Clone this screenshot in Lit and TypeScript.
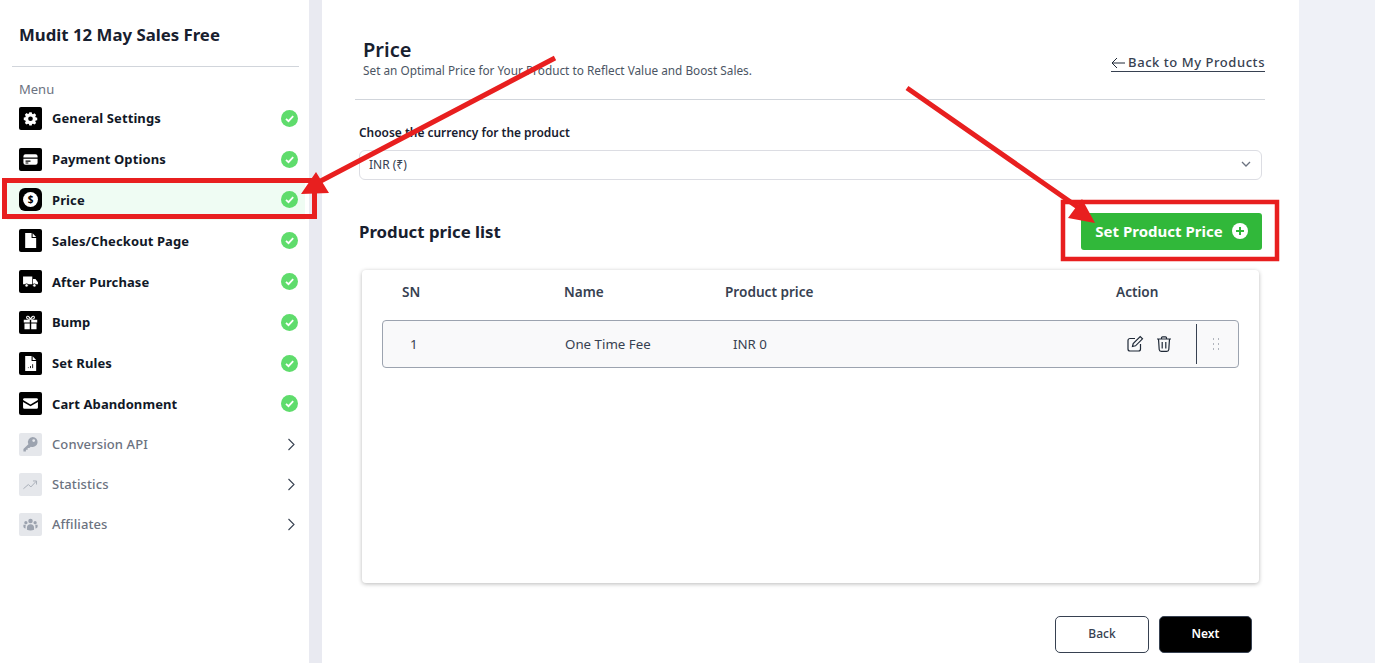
import { LitElement, html, css, svg } from 'lit';
import { customElement } from 'lit/decorators.js';

const icons: Record<string, unknown> = {
    gear: svg`<path fill-rule="evenodd" d="M10.3 3h3.4l.5 2.3 1.4.6 2-1.3 2.4 2.4-1.3 2 .6 1.4 2.2.5v3.4l-2.2.5-.6 1.4 1.3 2-2.4 2.4-2-1.3-1.4.6-.5 2.1h-3.4l-.5-2.1-1.4-.6-2 1.3-2.4-2.4 1.3-2-.6-1.4L2.5 14v-3.4l2.2-.5.6-1.4-1.3-2 2.4-2.4 2 1.3 1.4-.6zM12 9a3.3 3.3 0 1 0 0 6.600A3.300 3.300 0 0 0 12 9z" fill="#fff"/>`,
    card: svg`<path fill-rule="evenodd" d="M5 4.500h14a3 3 0 0 1 3 3V9H2V7.500a3 3 0 0 1 3-3zM2 11h20v5.500a3 3 0 0 1-3 3H5a3 3 0 0 1-3-3zm3 2.500V15h7v-1.500zm0 2.800v1.200h4v-1.200z" fill="#fff"/>`,
    dollar: svg`<circle cx="12" cy="12" r="10.500" fill="#fff"/><text x="12" y="16.800" text-anchor="middle" font-size="14" font-weight="700" font-family="Noto Sans" fill="#000">$</text>`,
    file: svg`<path d="M4.500 1.500h9v7h6.500V22.500H4.500z" fill="#fff"/><path d="M15 1.700 20 7h-5z" fill="#fff"/>`,
    truck: svg`<path d="M1.500 5h13v11h-13zM15.500 8.500H19l3.500 4.500v3h-7z" fill="#fff"/><circle cx="6.500" cy="17.500" r="2.300" fill="#fff" stroke="#000"/><circle cx="17.500" cy="17.500" r="2.300" fill="#fff" stroke="#000"/>`,
    gift: svg`<path d="M2.500 8h8.500v4H2.500zM13 8h8.500v4H13zM3.500 13.500H11V21.500H3.500zM13 13.500h7.500V21.500H13z" fill="#fff"/><path d="M12 7.500C10 2.500 6.500 2 6.500 5c0 2 3.500 2.500 5.500 2.500zm0 0c2-5 5.500-5.500 5.500-2.500 0 2-3.500 2.500-5.500 2.500z" fill="none" stroke="#fff" stroke-width="1.500"/>`,
    rules: svg`<path d="M4.500 1.500h9v7h6.500V22.500H4.500z" fill="#fff"/><path d="M15 1.700 20 7h-5z" fill="#fff"/><path d="M9 18.500v-1M12 18.500v-3M15 18.500v-5.500" stroke="#000" stroke-width="1.200"/>`,
    mail: svg`<path d="M3.500 4.500h17a2 2 0 0 1 2 2v.6L12 13.500 1.500 7.100v-.6a2 2 0 0 1 2-2z" fill="#fff"/><path d="M1.500 9.800 12 16l10.500-6.200v7.700a2 2 0 0 1-2 2h-17a2 2 0 0 1-2-2z" fill="#fff"/>`,
    key: svg`<path fill-rule="evenodd" d="M15 1.500a7 7 0 1 1-2.600 13.500L10.500 17H8v2.500H5.500V22H2v-3.500l7-7A7 7 0 0 1 15 1.500zm1.500 3a2 2 0 1 0 0 4 2 2 0 0 0 0-4z" fill="#9ca3af"/>`,
    trend: svg`<path d="M2 18l7-6 3.500 3.500L20 7.500M15.500 7H20.500V12" fill="none" stroke="#a5abb5" stroke-width="1.300"/>`,
    users: svg`<circle cx="12" cy="7" r="3.200" fill="#9ca3af"/><circle cx="5.500" cy="9.500" r="2.300" fill="#9ca3af"/><circle cx="18.500" cy="9.500" r="2.300" fill="#9ca3af"/><path d="M7 19.500v-3a5 5 0 0 1 10 0v3a14 14 0 0 1-10 0zM2 12.500h3.500a7 7 0 0 0-.5 3v2C3 17 2 16 2 15zM22 12.500h-3.500a7 7 0 0 1 .5 3v2c2-.5 3-1.500 3-2.500z" fill="#9ca3af"/>`,
};

const menu = [
    { label: 'General Settings', icon: 'gear', done: true },
    { label: 'Payment Options', icon: 'card', done: true },
    { label: 'Price', icon: 'dollar', done: true, active: true },
    { label: 'Sales/Checkout Page', icon: 'file', done: true },
    { label: 'After Purchase', icon: 'truck', done: true },
    { label: 'Bump', icon: 'gift', done: true },
    { label: 'Set Rules', icon: 'rules', done: true },
    { label: 'Cart Abandonment', icon: 'mail', done: true },
    { label: 'Conversion API', icon: 'key', done: false },
    { label: 'Statistics', icon: 'trend', done: false },
    { label: 'Affiliates', icon: 'users', done: false },
];

@customElement('app-root')
export class AppRoot extends LitElement {
    static styles = css`
        :host {
            display: block;
            position: relative;
            height: 663px;
            overflow: hidden;
            background: #eff1f7;
            font-family: 'Noto Sans', sans-serif;
            color: #111827;
        }

        .page {
            display: flex;
            height: 663px;
        }

        .side {
            width: 322px;
            flex: none;
            box-sizing: border-box;
            background: #fff;
            border-right: 13px solid #e9eaf1;
            padding: 0 10px 0 12px;
        }

        .side-title {
            font-size: 16.8px;
            font-weight: 700;
            line-height: 22px;
            color: #18202f;
            padding: 24px 0 20px 7px;
            border-bottom: 1px solid #d1d5db;
        }

        .menu-label {
            font-size: 13px;
            line-height: 18px;
            color: #6b7280;
            padding: 13px 0 0 7px;
        }

        .menu {
            display: flex;
            flex-direction: column;
        }

        .item {
            display: flex;
            align-items: center;
            height: 40.8px;
            margin: 0 -6px 0 -5px;
            padding: 0 7px 0 12px;
            font-size: 13px;
            font-weight: 700;
            letter-spacing: 0.1px;
            color: #111827;
        }

        .item.active {
            background: #effcf3;
        }

        .item.off {
            height: 40px;
            font-weight: 500;
            color: #6b7280;
        }

        .item.off .ic {
            background: #e5e7eb;
        }

        .ic {
            width: 23px;
            height: 23px;
            flex: none;
            border-radius: 2px;
            background: #000;
            display: flex;
            align-items: center;
            justify-content: center;
            margin-right: 10px;
        }

        .ic.round {
            border-radius: 6px;
        }

        .ic svg {
            width: 17px;
            height: 17px;
        }

        .label {
            flex: 1;
        }

        .tail {
            width: 17px;
            height: 17px;
        }

        .main {
            width: 977px;
            flex: none;
            box-sizing: border-box;
            background: #fff;
            padding: 0 34px 0 33px;
        }

        .head {
            display: flex;
            justify-content: space-between;
            height: 100px;
            box-sizing: border-box;
            border-bottom: 1px solid #d1d5db;
            padding: 38px 0 0 8px;
        }

        .head h1 {
            margin: 0;
            font-size: 20px;
            font-weight: 600;
            line-height: 24px;
            color: #18202f;
        }

        .head p {
            margin: 0;
            font-size: 11.8px;
            line-height: 17px;
            color: #4b5563;
        }

        .back {
            align-self: flex-start;
            display: flex;
            align-items: center;
            gap: 3px;
            margin-top: 16px;
            font-size: 13px;
            line-height: 17px;
            font-weight: 500;
            letter-spacing: 0.55px;
            color: #374151;
            border-bottom: 1px solid #374151;
        }

        .body {
            padding: 0 3px 0 4px;
        }

        .field-label {
            font-size: 11.95px;
            font-weight: 600;
            line-height: 16px;
            padding-top: 25px;
            color: #18202f;
        }

        .select {
            display: flex;
            align-items: center;
            justify-content: space-between;
            height: 30px;
            box-sizing: border-box;
            margin-top: 9px;
            padding: 0 10px 2px 9px;
            border: 1px solid #dcdde3;
            border-radius: 6px;
            font-size: 12px;
            color: #374151;
        }

        .list-head {
            display: flex;
            align-items: center;
            justify-content: space-between;
            margin-top: 33px;
            height: 37px;
        }

        .list-head h2 {
            margin: 0;
            font-size: 16.8px;
            font-weight: 700;
            color: #18202f;
        }

        .add {
            display: flex;
            align-items: center;
            justify-content: center;
            gap: 9px;
            width: 181px;
            height: 37px;
            box-sizing: border-box;
            padding-bottom: 1px;
            border-radius: 3px;
            background: #31b83a;
            color: #fff;
            font-size: 15px;
            font-weight: 700;
        }

        .card {
            margin: 20px 3px 0;
            height: 313px;
            box-sizing: border-box;
            padding: 0 20px;
            border-radius: 4px;
            background: #fff;
            box-shadow: 0 1px 4px rgba(0, 0, 0, 0.28);
        }

        .cols {
            display: grid;
            grid-template-columns: 182px 161px 391px 1fr;
            height: 44px;
            box-sizing: border-box;
            padding-bottom: 2px;
            align-items: center;
            font-size: 13.6px;
            font-weight: 600;
            color: #374151;
        }

        .cols span:first-child {
            padding-left: 20px;
        }

        .row {
            display: flex;
            align-items: center;
            height: 48px;
            margin-top: 6px;
            box-sizing: border-box;
            border: 1px solid #9ca3af;
            border-radius: 4px;
            background: #f9f9fa;
            font-size: 13.3px;
            color: #374151;
        }

        .row .sn {
            width: 182px;
            padding-left: 27px;
            box-sizing: border-box;
        }

        .row .nm {
            width: 168px;
        }

        .row .pr {
            flex: 1;
        }

        .acts {
            display: flex;
            align-items: center;
            gap: 11px;
            padding-right: 23px;
        }

        .divider {
            width: 1px;
            height: 40px;
            background: #374151;
        }

        .grip {
            width: 37px;
            padding-right: 4px;
            display: flex;
            justify-content: center;
        }

        .foot {
            display: flex;
            justify-content: flex-end;
            gap: 10px;
            margin-top: 33px;
            padding-right: 10px;
        }

        .btn {
            width: 94px;
            height: 37px;
            box-sizing: border-box;
            display: flex;
            align-items: center;
            justify-content: center;
            padding-bottom: 2px;
            border-radius: 5px;
            border: 1px solid #374151;
            font-size: 12px;
            font-weight: 500;
            color: #374151;
        }

        .btn.dark {
            width: 93px;
            background: #000;
            border-color: #374151;
            color: #fff;
            font-weight: 600;
        }

        .marks {
            position: absolute;
            inset: 0;
            width: 1375px;
            height: 663px;
            pointer-events: none;
        }
    `;

    private check() {
        return html`<svg class="tail" viewBox="0 0 17 17">
            <circle cx="8.500" cy="8.500" r="8.500" fill="#5fdc6c" />
            <path d="M5 8.800l2.500 2.400L12.200 6.200" fill="none" stroke="#fff" stroke-width="1.800" />
        </svg>`;
    }

    private chevron() {
        return html`<svg class="tail" viewBox="0 0 17 17">
            <path d="M7.500 3l5.500 5.500-5.500 5.500" fill="none" stroke="#374151" stroke-width="1.100" />
        </svg>`;
    }

    render() {
        return html`
            <div class="page">
                <aside class="side">
                    <div class="side-title">Mudit 12 May Sales Free</div>
                    <div class="menu-label">Menu</div>
                    <div class="menu">
                        ${menu.map(
                            (m) => html`
                                <div class="item ${m.active ? 'active' : ''} ${m.done ? '' : 'off'}">
                                    <span class="ic ${m.active ? 'round' : ''}">
                                        <svg viewBox="0 0 24 24">${icons[m.icon]}</svg>
                                    </span>
                                    <span class="label">${m.label}</span>
                                    ${m.done ? this.check() : this.chevron()}
                                </div>
                            `,
                        )}
                    </div>
                </aside>
                <main class="main">
                    <header class="head">
                        <div>
                            <h1>Price</h1>
                            <p>Set an Optimal Price for Your Product to Reflect Value and Boost Sales.</p>
                        </div>
                        <div class="back">
                            <svg width="14" height="12" viewBox="0 0 14 12">
                                <path d="M6 1 1 6l5 5M1 6h13" fill="none" stroke="#1f2937" stroke-width="1" />
                            </svg>
                            Back to My Products
                        </div>
                    </header>
                    <div class="body">
                        <div class="field-label">Choose the currency for the product</div>
                        <div class="select">
                            <span>INR (₹)</span>
                            <svg width="10" height="6" viewBox="0 0 10 6">
                                <path d="M1 1l4 4 4-4" fill="none" stroke="#6b7280" stroke-width="1.300" />
                            </svg>
                        </div>
                        <div class="list-head">
                            <h2>Product price list</h2>
                            <div class="add">
                                Set Product Price
                                <svg width="16" height="16" viewBox="0 0 16 16">
                                    <circle cx="8" cy="8" r="8" fill="#fff" />
                                    <path d="M8 4v8M4 8h8" stroke="#31b83a" stroke-width="2" />
                                </svg>
                            </div>
                        </div>
                        <section class="card">
                            <div class="cols">
                                <span>SN</span><span>Name</span><span>Product price</span><span>Action</span>
                            </div>
                            <div class="row">
                                <span class="sn">1</span>
                                <span class="nm">One Time Fee</span>
                                <span class="pr">INR 0</span>
                                <div class="acts">
                                    <svg width="18" height="18" viewBox="0 0 18 18" fill="none" stroke="#1f2937" stroke-width="1.200">
                                        <path d="M9 3.500H4a2 2 0 0 0-2 2V14a2 2 0 0 0 2 2h8.500a2 2 0 0 0 2-2V9" />
                                        <path d="M6.500 11.500l.7-3L14.200 1.500l2.300 2.300-7 7z" />
                                    </svg>
                                    <svg width="18" height="18" viewBox="0 0 18 18" fill="none" stroke="#1f2937" stroke-width="1.200">
                                        <path d="M2 4h14M6.500 4V2.800a1 1 0 0 1 1-1h3a1 1 0 0 1 1 1V4M3.500 4l.7 10.500a2 2 0 0 0 2 1.800h5.600a2 2 0 0 0 2-1.800L14.500 4M7.200 7v6.500M10.800 7v6.500" />
                                    </svg>
                                </div>
                                <span class="divider"></span>
                                <span class="grip">
                                    <svg width="8" height="12" viewBox="0 0 8 12" fill="#6b7280">
                                        <rect x="1" y="0.500" width="1" height="1" /><rect x="6" y="0.500" width="1" height="1" />
                                        <rect x="1" y="5.500" width="1" height="1" /><rect x="6" y="5.500" width="1" height="1" />
                                        <rect x="1" y="10.500" width="1" height="1" /><rect x="6" y="10.500" width="1" height="1" />
                                    </svg>
                                </span>
                            </div>
                        </section>
                        <div class="foot">
                            <div class="btn">Back</div>
                            <div class="btn dark">Next</div>
                        </div>
                    </div>
                </main>
            </div>
            <svg class="marks" viewBox="0 0 1375 663" fill="none" stroke="#e81f1f">
                <rect x="4.500" y="180.500" width="310" height="36" stroke-width="5" />
                <rect x="1063" y="202" width="214" height="57" stroke-width="4.500" />
                <path d="M555 58 315 184M907 88l175 122" stroke-width="5" />
                <path d="M301 194 316 172 329 193zM1095 223 1082 199 1068 218z" fill="#e81f1f" stroke="none" />
            </svg>
        `;
    }
}
